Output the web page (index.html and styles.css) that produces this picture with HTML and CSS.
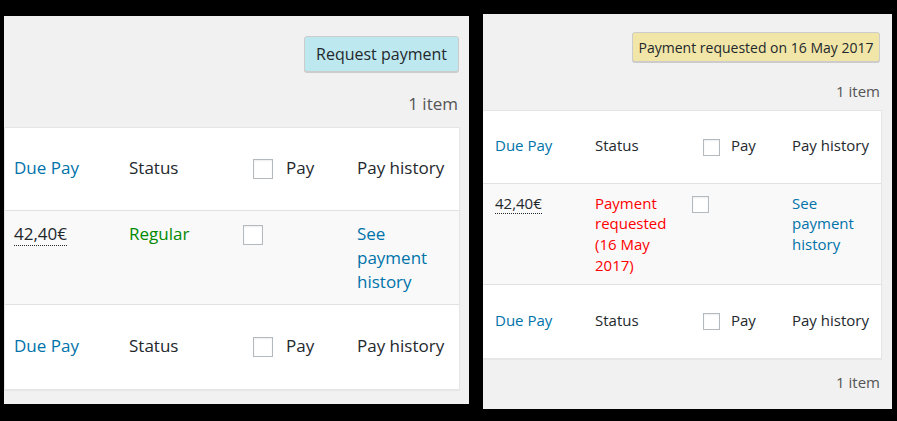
FILE: index.html
```html
<!DOCTYPE html>
<html lang="en">

<head>
  <meta charset="utf8">
  <title>Payments</title>
  <link rel="stylesheet" href="styles.css">
</head>

<body>
  <div class="shots">
    <div class="panel panel-before">
      <div class="actions">
        <button class="btn btn-request">Request payment</button>
      </div>
      <div class="count">1 item</div>
      <div class="table-wrap">
        <table class="pays">
          <colgroup>
            <col class="c1"><col class="c2"><col class="c3"><col class="c4">
          </colgroup>
          <thead>
            <tr>
              <th class="link">Due Pay</th>
              <th>Status</th>
              <th class="check-head"><span class="box"></span>Pay</th>
              <th>Pay history</th>
            </tr>
          </thead>
          <tbody>
            <tr>
              <td><abbr>42,40€</abbr></td>
              <td class="regular">Regular</td>
              <td><span class="box box-row"></span></td>
              <td class="link">See payment history</td>
            </tr>
          </tbody>
          <tfoot>
            <tr>
              <th class="link">Due Pay</th>
              <th>Status</th>
              <th class="check-head"><span class="box"></span>Pay</th>
              <th>Pay history</th>
            </tr>
          </tfoot>
        </table>
      </div>
    </div>

    <div class="panel panel-after">
      <div class="actions">
        <button class="btn btn-requested">Payment requested on 16 May 2017</button>
      </div>
      <div class="count">1 item</div>
      <div class="table-wrap">
        <table class="pays">
          <colgroup>
            <col class="c1"><col class="c2"><col class="c3"><col class="c4">
          </colgroup>
          <thead>
            <tr>
              <th class="link">Due Pay</th>
              <th>Status</th>
              <th class="check-head"><span class="box"></span>Pay</th>
              <th>Pay history</th>
            </tr>
          </thead>
          <tbody>
            <tr>
              <td><abbr>42,40€</abbr></td>
              <td class="requested">Payment requested (16 May 2017)</td>
              <td><span class="box box-row"></span></td>
              <td class="link">See payment history</td>
            </tr>
          </tbody>
          <tfoot>
            <tr>
              <th class="link">Due Pay</th>
              <th>Status</th>
              <th class="check-head"><span class="box"></span>Pay</th>
              <th>Pay history</th>
            </tr>
          </tfoot>
        </table>
      </div>
      <div class="count count-bottom">1 item</div>
    </div>
  </div>
</body>

</html>
```

FILE: styles.css
```css
html,
body {
  margin: 0;
  height: 100%;
  background: #000;
}

body {
  font-family: 'Open Sans', 'Noto Sans', sans-serif;
  color: #23282d;
}

.shots {
  display: flex;
  align-items: flex-start;
  padding-left: 4px;
}

.panel {
  background: #f1f1f1;
  overflow: hidden;
  box-sizing: border-box;
}

/* left screenshot */
.panel-before {
  width: 465px;
  height: 388px;
  margin-top: 16px;
  padding-right: 10px;
  font-size: 17px;
  line-height: 24px;
}

.panel-before .actions {
  padding-top: 20px;
}

.panel-before .btn {
  width: 155px;
  height: 36px;
  font-size: 16px;
}

.panel-before .count {
  margin-top: 20px;
  padding-right: 1px;
}

.panel-before .table-wrap {
  margin-top: 11px;
  width: 454px;
}

.panel-before .c1 { width: 115px; }
.panel-before .c2 { width: 114px; }
.panel-before .c3 { width: 114px; }
.panel-before .c4 { width: 111px; }

.panel-before thead th { height: 79px; }
.panel-before tfoot th { height: 81px; }

.panel-before th,
.panel-before td {
  padding: 0 9px;
}

.panel-before th {
  padding-bottom: 3px;
}

.panel-before tbody td {
  padding: 11px 9px 10px;
}

.panel-before .box {
  width: 18px;
  height: 18px;
}

.panel-before .check-head .box {
  margin: 0 13px 0 10px;
}

.panel-before .box-row {
  margin-top: 3px;
  margin-left: 0;
}

/* right screenshot */
.panel-after {
  width: 409px;
  height: 395px;
  margin-top: 14px;
  margin-left: 14px;
  padding-right: 12px;
  font-size: 15px;
  line-height: 20.7px;
}

.panel-after .actions {
  padding-top: 18px;
}

.panel-after .btn {
  width: 248px;
  height: 30px;
  font-size: 14px;
}

.panel-after .count {
  margin-top: 19px;
}

.panel-after .table-wrap {
  margin-top: 8px;
  margin-left: -1px;
  width: 398px;
}

.panel-after .count-bottom {
  margin-top: 13px;
}

.panel-after .c1 { width: 104px; }
.panel-after .c2 { width: 99px; }
.panel-after .c3 { width: 98px; }
.panel-after .c4 { width: 97px; }

.panel-after thead th { height: 70px; }
.panel-after tfoot th { height: 71px; }

.panel-after th,
.panel-after td {
  padding: 0 8px;
}

.panel-after th {
  padding-bottom: 2px;
}

.panel-after th:first-child,
.panel-after td:first-child {
  padding-left: 12px;
}

.panel-after tbody td {
  padding-top: 9px;
  padding-bottom: 8px;
}

.panel-after .box {
  width: 15px;
  height: 15px;
}

.panel-after .check-head .box {
  margin: 0 11px 0 9px;
}

.panel-after .box-row {
  margin-top: 3px;
  margin-left: -2px;
}

/* shared parts */
.actions {
  display: flex;
  justify-content: flex-end;
}

.btn {
  font-family: inherit;
  color: #23282d;
  border: 1px solid #ccc;
  border-radius: 3px;
  box-shadow: 0 1px 0 #ccc;
  padding: 0;
  white-space: nowrap;
}

.btn-request {
  background: #bee8ef;
}

.btn-requested {
  background: #f1e6a7;
}

.count {
  text-align: right;
  color: #555;
}

.table-wrap {
  background: #fff;
  border: 1px solid #e5e5e5;
  box-shadow: 0 1px 1px rgba(0, 0, 0, 0.04);
}

.pays {
  width: 100%;
  border-collapse: collapse;
  table-layout: fixed;
}

.pays th {
  font-weight: normal;
  text-align: left;
  vertical-align: middle;
  white-space: nowrap;
}

.pays td {
  vertical-align: top;
}

.pays tbody tr {
  background: #f9f9f9;
  border-top: 1px solid #e1e1e1;
  border-bottom: 1px solid #e1e1e1;
}

.link {
  color: #0073aa;
}

.regular {
  color: #008a00;
}

.requested {
  color: #ff0000;
}

abbr {
  text-decoration: none;
  border-bottom: 1px dotted #23282d;
  color: #23282d;
}

.box {
  display: inline-block;
  vertical-align: middle;
  background: #fff;
  border: 1px solid #b4b9be;
  box-shadow: inset 0 1px 2px rgba(0, 0, 0, 0.07);
}

.box-row {
  vertical-align: top;
}
```
